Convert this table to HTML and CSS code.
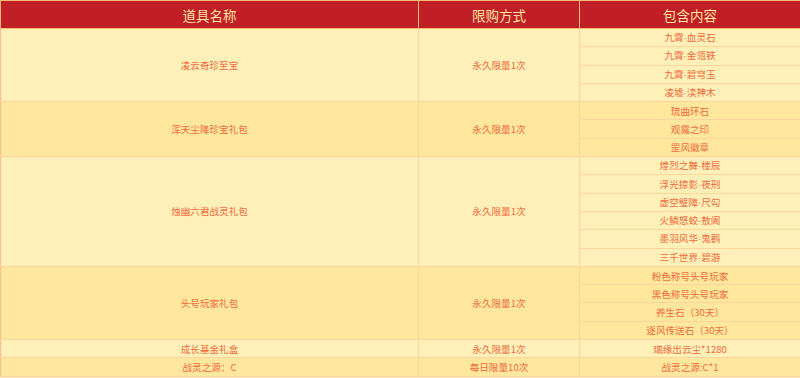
FILE: index.html
```html
<!DOCTYPE html>
<html lang="zh">
<head>
<meta charset="utf-8">
<title>礼包</title>
<link rel="stylesheet" href="styles.css">
</head>
<body>
<table class="gift">
  <colgroup>
    <col class="c-name">
    <col class="c-limit">
    <col class="c-content">
  </colgroup>
  <thead>
    <tr class="head"><th>道具名称</th><th>限购方式</th><th>包含内容</th></tr>
  </thead>
  <tbody class="light">
    <tr><td rowspan="4">凌云奇珍至宝</td><td rowspan="4">永久限量1次</td><td>九霄<span class="dot">·</span>血灵石</td></tr>
    <tr><td>九霄<span class="dot">·</span>金瓴铁</td></tr>
    <tr><td>九霄<span class="dot">·</span>碧穹玉</td></tr>
    <tr><td>凌墟<span class="dot">·</span>渎神木</td></tr>
  </tbody>
  <tbody class="dark">
    <tr><td rowspan="3">浑天尘降珍宝礼包</td><td rowspan="3">永久限量1次</td><td>琉曲环石</td></tr>
    <tr><td>观露之印</td></tr>
    <tr><td>罡风徽章</td></tr>
  </tbody>
  <tbody class="light">
    <tr><td rowspan="6">烛幽六君战灵礼包</td><td rowspan="6">永久限量1次</td><td>煌烈之舞<span class="dot">·</span>楼辰</td></tr>
    <tr><td>浮光掠影<span class="dot">·</span>夜刑</td></tr>
    <tr><td>虚空璧障<span class="dot">·</span>尺勾</td></tr>
    <tr><td>火鳞怒蛟<span class="dot">·</span>敖阖</td></tr>
    <tr><td>墨羽风华<span class="dot">·</span>鬼鹳</td></tr>
    <tr><td>三千世界<span class="dot">·</span>碧游</td></tr>
  </tbody>
  <tbody class="dark">
    <tr><td rowspan="4">头号玩家礼包</td><td rowspan="4">永久限量1次</td><td>粉色称号头号玩家</td></tr>
    <tr><td>黑色称号头号玩家</td></tr>
    <tr><td>养生石（30天）</td></tr>
    <tr><td>逐风传送石（30天）</td></tr>
  </tbody>
  <tbody class="light">
    <tr><td>成长基金礼盒</td><td>永久限量1次</td><td>璃缘出云尘*1280</td></tr>
  </tbody>
  <tbody class="dark">
    <tr><td>战灵之源：C</td><td>每日限量10次</td><td>战灵之源:C*1</td></tr>
  </tbody>
</table>
</body>
</html>
```
FILE: styles.css
```css
html, body {
  margin: 0;
  padding: 0;
  background: #fff0b9;
}
.gift {
  width: 800px;
  border-collapse: collapse;
  table-layout: fixed;
  font-family: "Microsoft YaHei", "Noto Sans CJK SC", "Noto Sans", sans-serif;
}
.c-name { width: 418px; }
.c-limit { width: 161px; }
.c-content { width: 221px; }
.gift th,
.gift td {
  border: 1px solid #fdd49c;
  padding: 0;
  text-align: center;
  vertical-align: middle;
}
.head th {
  height: 27px;
  background: #c01f25;
  color: #fde3a3;
  font-size: 13.5px;
  font-weight: normal;
  line-height: 16px;
  border-color: #f6b878;
}
.gift td {
  height: 17.3px;
  font-size: 9.6px;
  line-height: 12px;
  color: #f06a3c;
}
.gift td:first-child {
  border-left-color: #f9c08a;
}
.dot {
  font-family: "Liberation Sans", sans-serif;
}
.light td { background: #fff0b9; }
.dark td { background: #ffe89e; }
```
